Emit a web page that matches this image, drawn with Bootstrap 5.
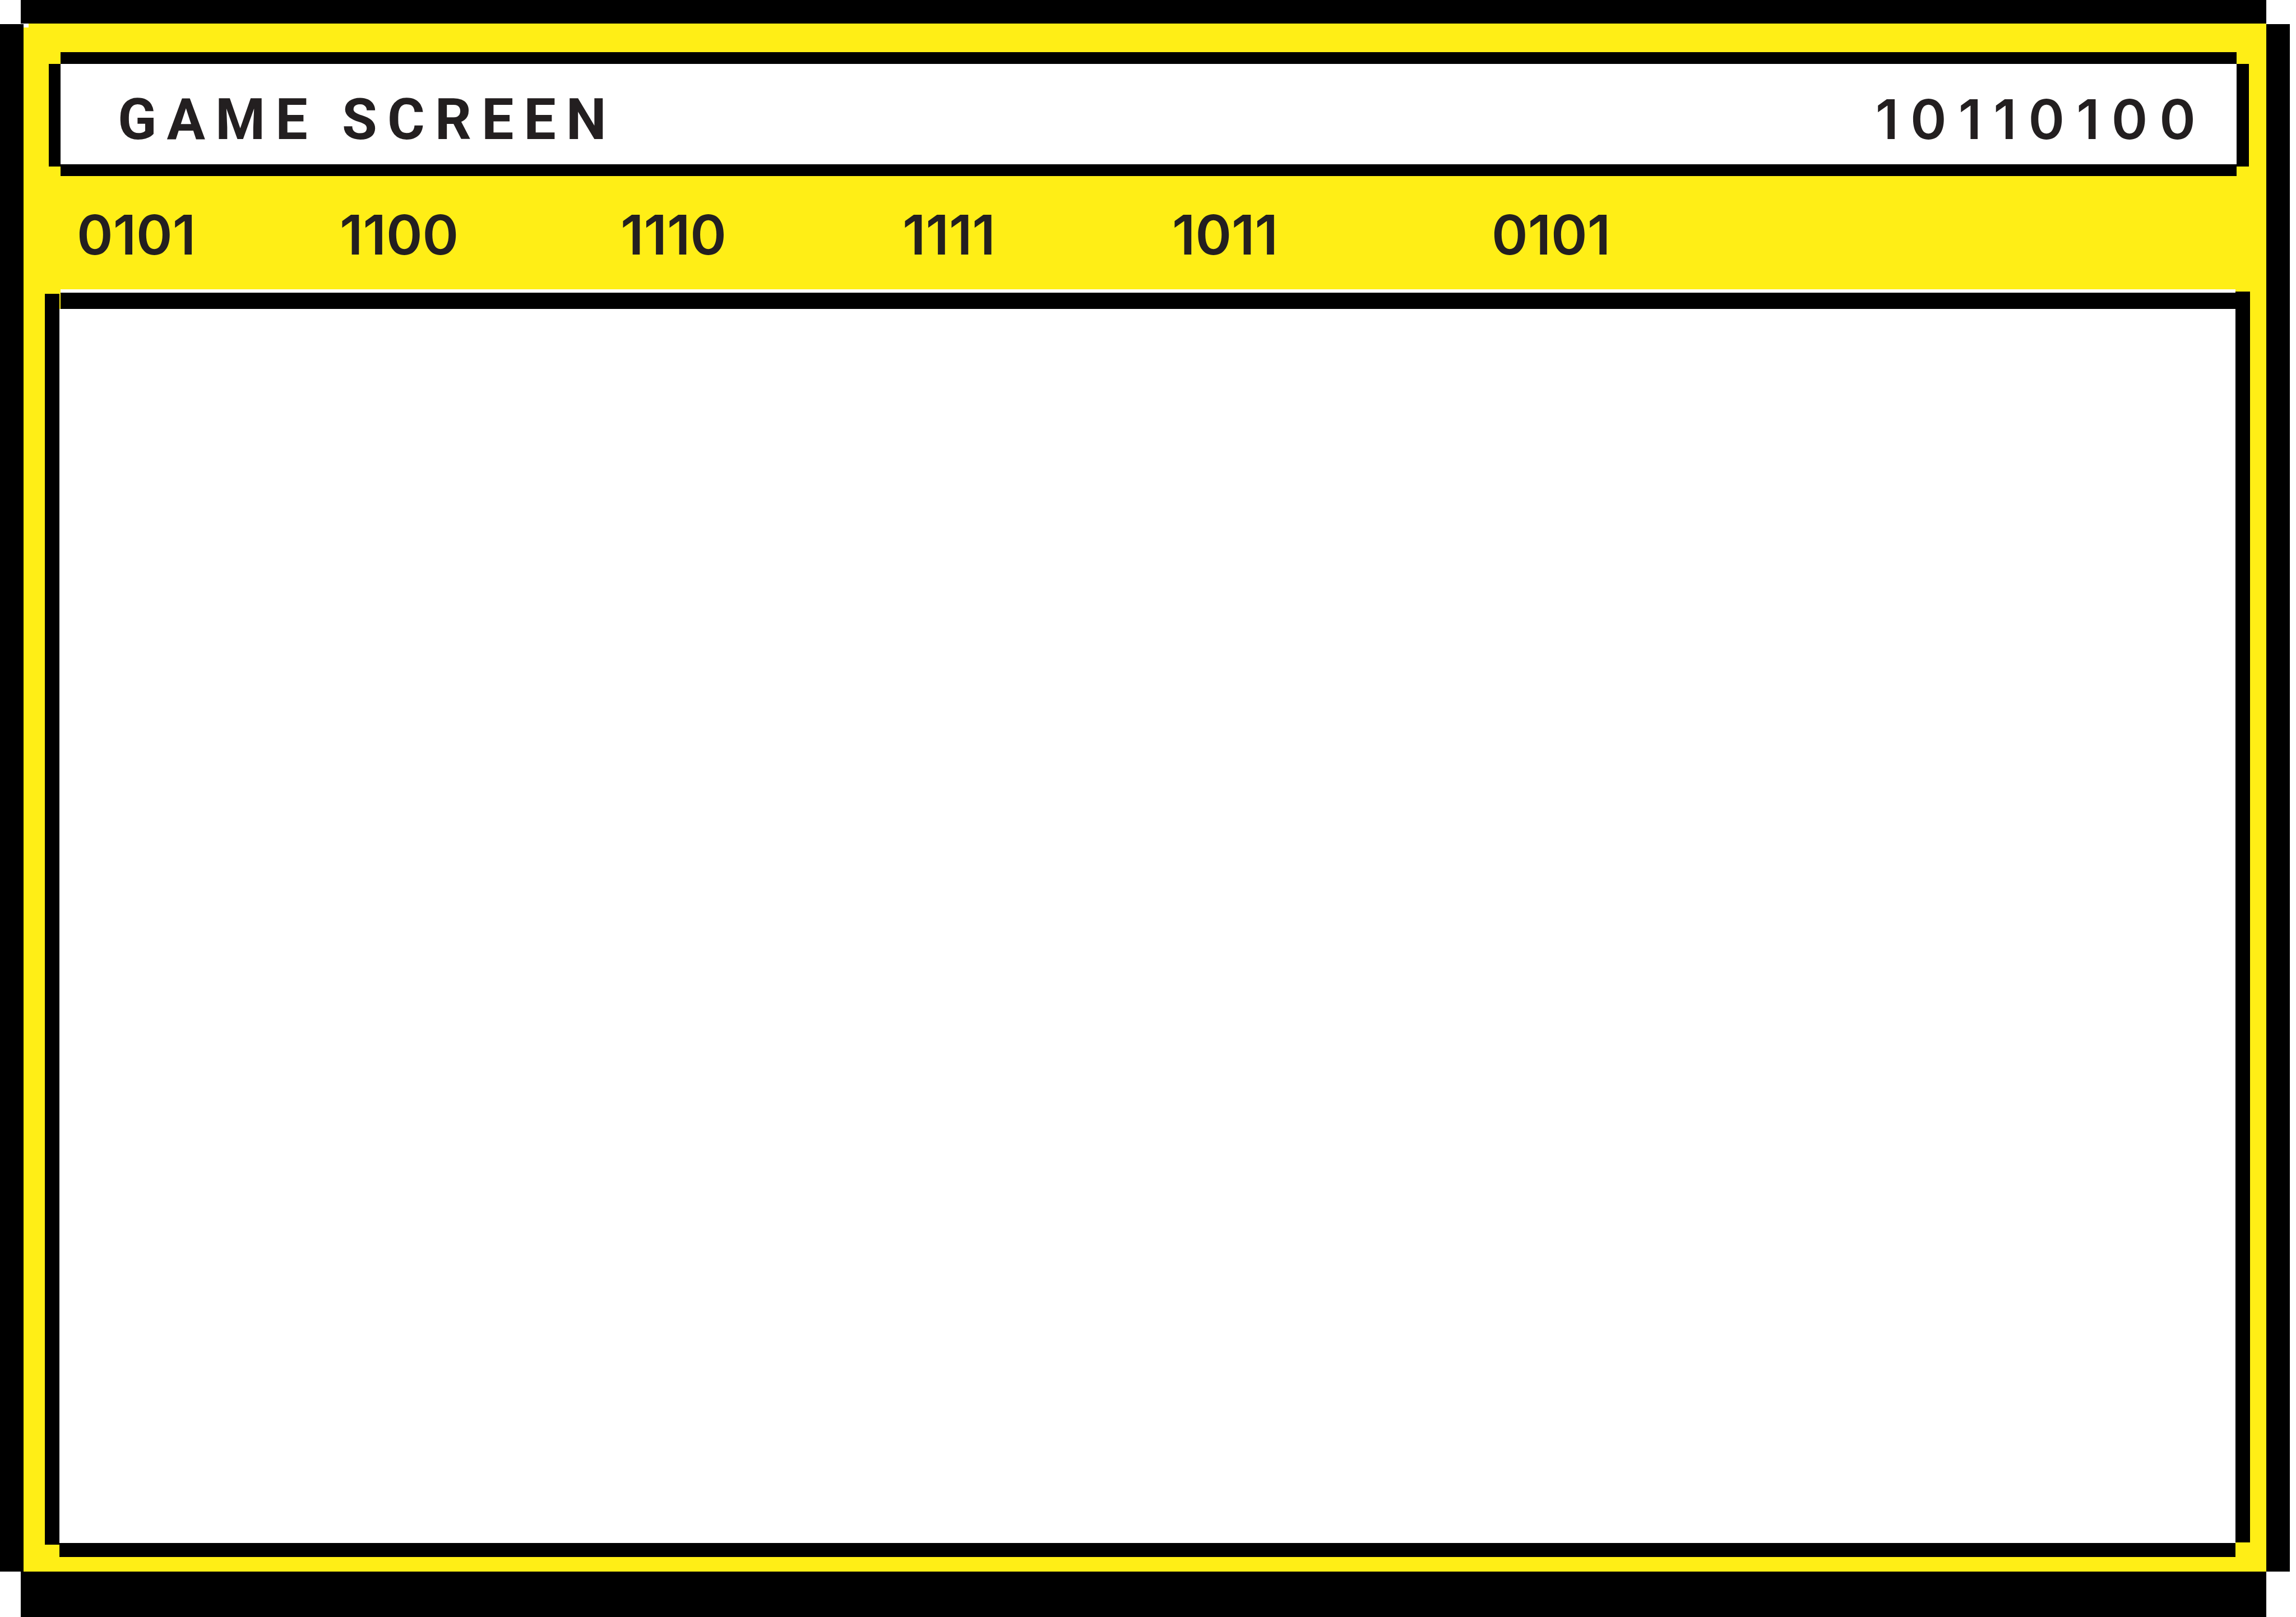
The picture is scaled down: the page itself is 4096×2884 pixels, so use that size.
<!DOCTYPE html>
<html lang="en">
<head>
<meta charset="utf-8">
<meta name="viewport" content="width=device-width, initial-scale=1">
<title>Game Screen</title>
<link href="https://cdn.jsdelivr.net/npm/bootstrap@5.3.0/dist/css/bootstrap.min.css" rel="stylesheet">
<style>
  :root { --ink: #231f20; --sun: #ffee16; }
  body { background: #fff; color: var(--ink); font-family: Inter, "Liberation Sans", sans-serif; }

  /* outer frame, corners left open for the pixel look */
  .frame-top { height: 42px; margin: 0 53px 0 37px; }
  .frame-bottom { height: 81px; margin: 0 53px 0 37px; }
  .frame-side { width: 42px; margin-top: 1px; }
  .frame-body { padding-right: 11px; }
  .console { background: var(--sun); padding-bottom: 26px; }
  .console::before { content: ""; position: absolute; top: 0; left: 0; width: 9px; height: 7px; background: #fff; }

  /* title box */
  .title-box { margin: 51px 31px 0 45px; }
  .title-box .edge { height: 21px; margin: 0 22px 0 21px; }
  .title-box .side { width: 21px; margin-bottom: -4px; }
  .title-box .side-end { width: 22px; }
  .title-line { padding: 48px 52px 29px 102px; }
  .title-text { font: 700 102px/1 Roboto, "Liberation Sans", sans-serif; letter-spacing: 18px; }
  .title-code { font-size: 98px; line-height: 1; font-weight: 600; letter-spacing: 21px; }

  /* menu */
  .menu { display: grid; grid-template-columns: 469fr 501fr 503fr 481fr 570fr 1382fr; padding: 56px 0 48px 95px; }
  .menu a { display: block; color: var(--ink); font-size: 98px; line-height: 98px; font-weight: 600; }

  /* play area */
  .stage { margin: 0 29px 0 38px; }
  .stage-left { width: 26px; margin: 8px 0 22px; }
  .stage-right { width: 26px; margin: 4px 0 26px; }
  .stage-top { height: 35px; margin-left: 2px; border-top: 6px solid #fff; }
  .stage-bottom { height: 25px; }
</style>
<script src="https://cdn.jsdelivr.net/npm/bootstrap@5.3.0/dist/js/bootstrap.bundle.min.js"></script>
</head>
<body class="d-flex flex-column min-vh-100">
  <div class="frame-top bg-black"></div>
  <div class="frame-body d-flex flex-fill">
    <div class="frame-side bg-black"></div>
    <div class="console position-relative d-flex flex-column flex-fill">
      <header class="title-box">
        <div class="edge bg-black"></div>
        <div class="d-flex">
          <div class="side bg-black"></div>
          <div class="title-line bg-white flex-fill d-flex justify-content-between align-items-baseline">
            <h1 class="title-text m-0">GAME SCREEN</h1>
            <span class="title-code">10110100</span>
          </div>
          <div class="side side-end bg-black"></div>
        </div>
        <div class="edge bg-black"></div>
      </header>
      <nav class="menu">
        <a class="text-decoration-none" href="#">0101</a>
        <a class="text-decoration-none" href="#">1100</a>
        <a class="text-decoration-none" href="#">1110</a>
        <a class="text-decoration-none" href="#">1111</a>
        <a class="text-decoration-none" href="#">1011</a>
        <a class="text-decoration-none" href="#">0101</a>
      </nav>
      <main class="stage d-flex flex-fill">
        <div class="stage-left bg-black"></div>
        <div class="d-flex flex-column flex-fill">
          <div class="stage-top bg-black"></div>
          <div class="bg-white flex-fill"></div>
          <div class="stage-bottom bg-black"></div>
        </div>
        <div class="stage-right bg-black"></div>
      </main>
    </div>
    <div class="frame-side bg-black"></div>
  </div>
  <div class="frame-bottom bg-black"></div>
</body>
</html>
